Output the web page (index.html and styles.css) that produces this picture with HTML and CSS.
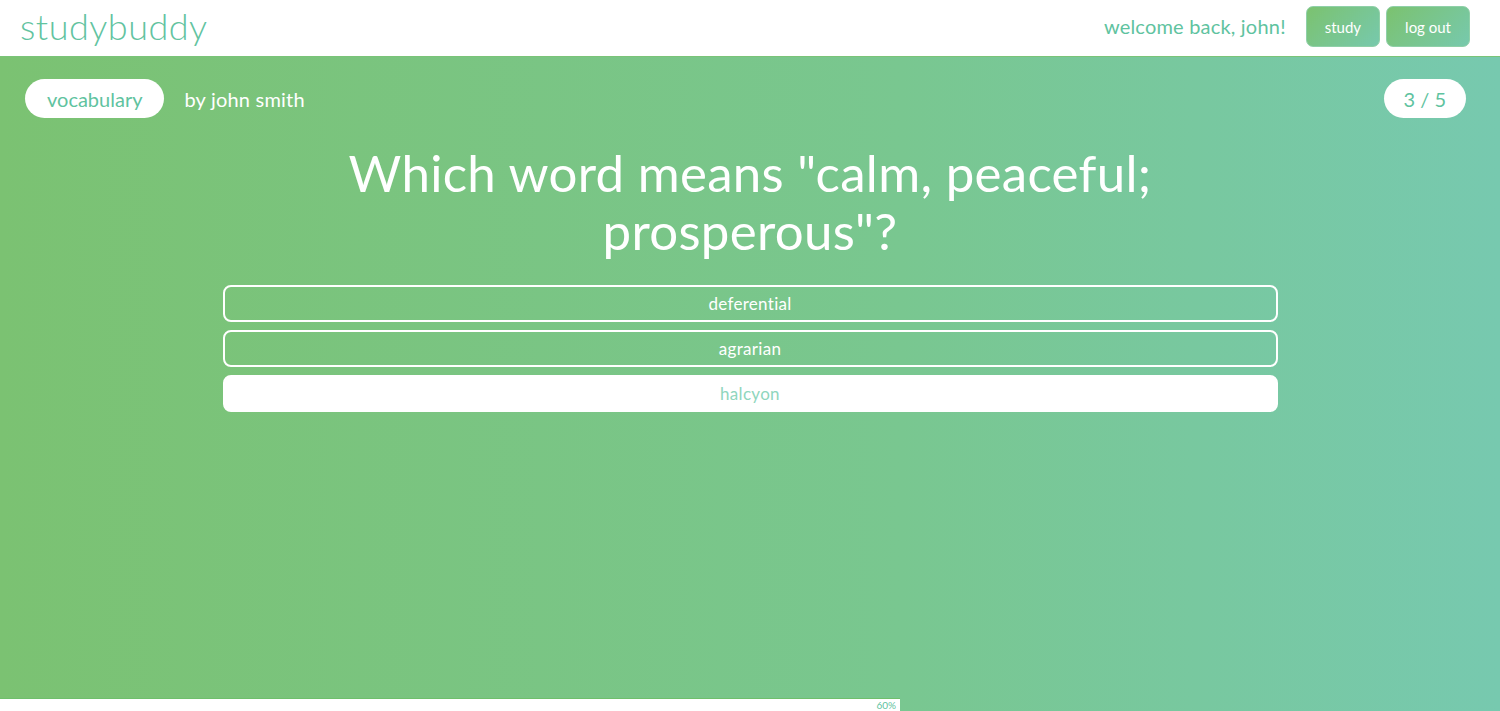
FILE: index.html
```html
<!DOCTYPE html>
<html>
<head>
<meta charset="utf-8">
<link rel="stylesheet" href="styles.css">
</head>
<body>
<header class="topbar">
  <div class="logo">studybuddy</div>
  <nav class="nav">
    <span class="welcome">welcome back, john!</span>
    <button class="navbtn">study</button>
    <button class="navbtn">log out</button>
  </nav>
</header>
<main class="stage">
  <div class="meta">
    <div class="meta-left">
      <span class="pill">vocabulary</span>
      <span class="author">by john smith</span>
    </div>
    <span class="pill counter">3 / 5</span>
  </div>
  <h1 class="question">Which word means "calm, peaceful; prosperous"?</h1>
  <div class="options">
    <button class="option">deferential</button>
    <button class="option">agrarian</button>
    <button class="option selected">halcyon</button>
  </div>
  <div class="progress">
    <div class="progress-fill" style="width:60%">60%</div>
  </div>
</main>
</body>
</html>
```

FILE: styles.css
```css
html, body {
  margin: 0;
  padding: 0;
  height: 100%;
}
body {
  font-family: "Lato", "Noto Sans", sans-serif;
  display: flex;
  flex-direction: column;
  overflow: hidden;
}
.topbar {
  height: 57px;
  flex: 0 0 57px;
  background: #fff;
  border-bottom: 1px solid #7ac478;
  display: flex;
  align-items: flex-start;
  justify-content: space-between;
  padding: 0 30px 0 20px;
  box-sizing: border-box;
}
.logo {
  color: #62c3a0;
  font-size: 36px;
  font-weight: 300;
  letter-spacing: 0.5px;
  line-height: 52px;
}
.nav {
  display: flex;
  align-items: center;
  gap: 6px;
  padding-top: 6px;
}
.welcome {
  color: #5fc3a0;
  font-size: 20px;
  letter-spacing: 0.2px;
  margin-right: 14px;
  margin-top: -2px;
}
.navbtn {
  font-family: inherit;
  font-size: 15px;
  color: #fff;
  border: 1px solid #8fd0a8;
  border-radius: 7px;
  height: 41px;
  padding: 0 18px;
  background: linear-gradient(135deg, #7bc26f 0%, #77c9ad 100%);
}
.stage {
  flex: 1;
  position: relative;
  background: linear-gradient(to right, #7bc272 0%, #79c790 60%, #77c9af 100%);
  display: flex;
  flex-direction: column;
  align-items: center;
}
.meta {
  align-self: stretch;
  display: flex;
  justify-content: space-between;
  align-items: center;
  padding: 22px 34px 0 25px;
}
.meta-left {
  display: flex;
  align-items: center;
  gap: 20px;
}
.pill {
  background: #fff;
  color: #5fc3a0;
  font-size: 20px;
  height: 39px;
  display: inline-flex;
  align-items: center;
  padding: 0 22px;
  border-radius: 20px;
  box-sizing: border-box;
}
.counter {
  padding: 0 20px;
}
.author {
  color: #fff;
  font-size: 20px;
  letter-spacing: 0.2px;
}
.question {
  color: #fff;
  font-size: 51px;
  font-weight: 400;
  text-align: center;
  line-height: 58px;
  max-width: 840px;
  margin: 26px 0 25px;
  letter-spacing: 0.3px;
}
.options {
  width: 1055px;
  display: flex;
  flex-direction: column;
  gap: 8px;
}
.option {
  font-family: inherit;
  height: 37px;
  border: 2px solid #fff;
  border-radius: 8px;
  background: transparent;
  color: #fff;
  font-size: 17px;
  letter-spacing: 0.3px;
}
.option.selected {
  background: #fff;
  color: #8fd6bd;
}
.progress {
  position: absolute;
  left: 0;
  right: 0;
  bottom: 0;
  height: 13px;
}
.progress-fill {
  height: 100%;
  background: #fff;
  color: #5fc3a0;
  font-size: 10px;
  line-height: 13px;
  text-align: right;
  padding-right: 4px;
  box-sizing: border-box;
  border-top: 1px solid #6fbf6c;
}
```
